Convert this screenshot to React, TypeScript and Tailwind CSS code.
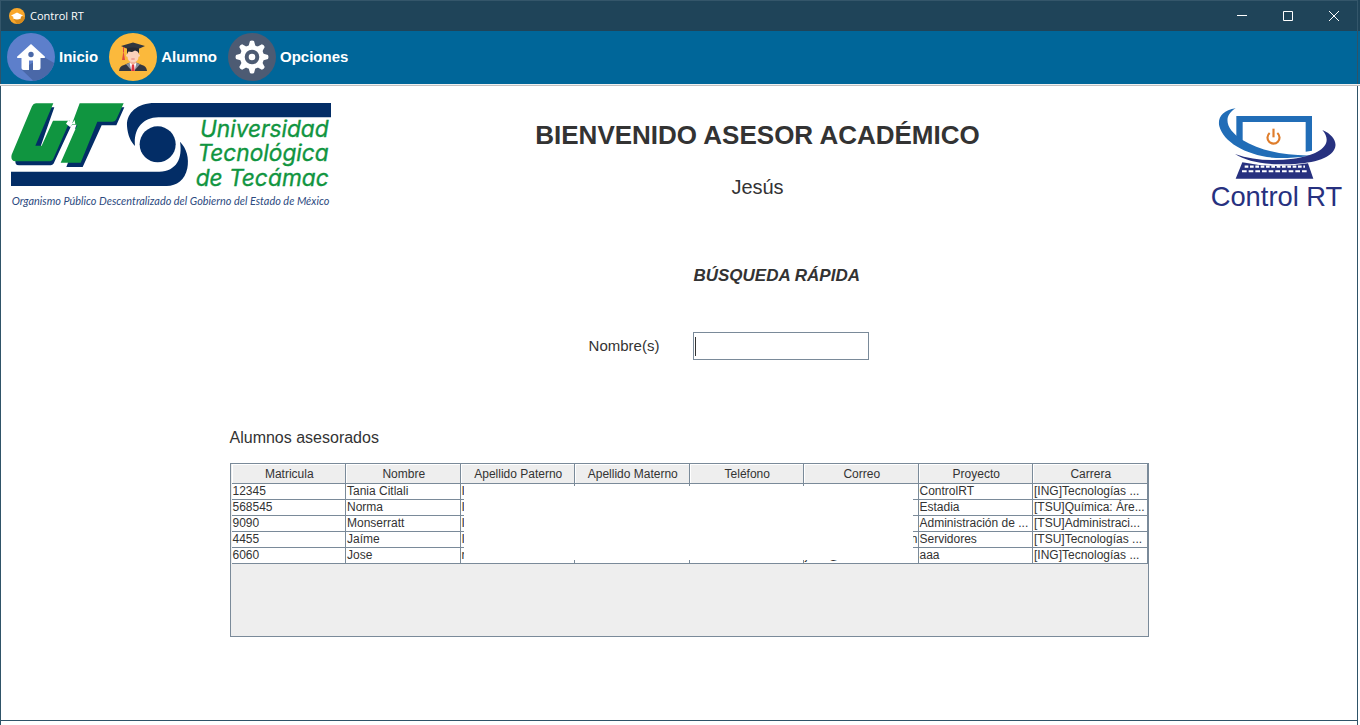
import React from "react";

const columns = [
  "Matricula",
  "Nombre",
  "Apellido Paterno",
  "Apellido Materno",
  "Teléfono",
  "Correo",
  "Proyecto",
  "Carrera",
];

type Student = {
  id: string;
  name: string;
  initial: string;
  mail?: React.ReactNode;
  project: string;
  degree: string;
};

const students: Student[] = [
  { id: "12345", name: "Tania Citlali", initial: "I", project: "ControlRT", degree: "[ING]Tecnologías ..." },
  { id: "568545", name: "Norma", initial: "I", project: "Estadia", degree: "[TSU]Química: Áre..." },
  { id: "9090", name: "Monserratt", initial: "I", project: "Administración de ...", degree: "[TSU]Administraci..." },
  {
    id: "4455",
    name: "Jaíme",
    initial: "I",
    mail: <span className="block text-right">n</span>,
    project: "Servidores",
    degree: "[TSU]Tecnologías ...",
  },
  {
    id: "6060",
    name: "Jose",
    initial: "r",
    mail: (
      <span className="flex gap-5">
        <span>j</span>
        <span>@</span>
      </span>
    ),
    project: "aaa",
    degree: "[ING]Tecnologías ...",
  },
];

function AppIcon() {
  return (
    <svg viewBox="0 0 16 16" className="size-4" aria-hidden="true">
      <circle cx="8" cy="8" r="8" fill="#f9a72b" />
      <path d="M13 8l3 1.500A8 8 0 0 1 8 16L4.500 11z" fill="#d68a1c" />
      <path d="M2 7.500L8 4.600l6 2.900-2.200 1.200v1.800Q8 12.600 4.300 10.500V8.700z" fill="#fff" />
    </svg>
  );
}

function HomeIcon() {
  return (
    <svg viewBox="0 0 48 48" className="size-12" aria-hidden="true">
      <circle cx="24" cy="24" r="24" fill="#5d7fcb" />
      <path d="M36 23.500L47.200 30A24 24 0 0 1 26.500 47.900L14.500 36.500z" fill="#4a68a8" />
      <path
        d="M24 11L10 23.700Q9.600 25 11 25H14.500V35Q14.500 37 16.500 37H22V27.500H26V37H31.500Q33.500 37 33.500 35V25H37Q38.400 25 38 23.700z"
        fill="#fff"
      />
      <circle cx="24" cy="21.500" r="2.700" fill="#4a68a8" />
    </svg>
  );
}

function StudentIcon() {
  return (
    <svg viewBox="0 0 48 48" className="size-12" aria-hidden="true">
      <circle cx="24" cy="24" r="24" fill="#fbb93c" />
      <path d="M10 38Q10.500 33 15 32L21 29.500H27L33 32Q37.500 33 38 38z" fill="#333741" />
      <path d="M17 31.200L21 29.500H27L31 31.200L25 38H23z" fill="#8b8f9b" />
      <path d="M20.500 29.500H27.500L25.500 38H22.500z" fill="#fff" />
      <path d="M23 31H25L25.800 38H22.200z" fill="#df3540" />
      <path d="M21 26H27V30L24 32L21 30z" fill="#f1b59c" />
      <path d="M18.500 17H29.500V23.500Q29.500 29 24 29Q18.500 29 18.500 23.500z" fill="#fbd1bb" />
      <circle cx="18.300" cy="22.500" r="1.200" fill="#fbd1bb" />
      <circle cx="29.700" cy="22.500" r="1.200" fill="#fbd1bb" />
      <path d="M18 14H30V20.500L28.500 18.500L26 17.500L23 19L19.500 18.500L18 21z" fill="#262a33" />
      <path d="M24 9.500L36 13L30.500 15.500Q24 13.500 17.500 15.500L12 13z" fill="#303640" />
      <path d="M14.500 14V19" stroke="#e04a3f" strokeWidth="1" />
      <path d="M14.500 18L16 27H13z" fill="#e04a3f" />
      <path d="M22.300 26H25.700" stroke="#d9575a" strokeWidth=".7" />
    </svg>
  );
}

function GearIcon() {
  return (
    <svg viewBox="0 0 48 48" className="size-12" aria-hidden="true">
      <circle cx="24" cy="24" r="24" fill="#4d5b73" />
      <g fill="#fff">
        {[0, 45, 90, 135, 180, 225, 270, 315].map((angle) => (
          <path key={angle} d="M20 15L22 8Q24 7 26 8L28 15z" transform={`rotate(${angle} 24 24)`} />
        ))}
        <circle cx="24" cy="24" r="12" />
      </g>
      <circle cx="24" cy="24" r="5.300" fill="none" stroke="#4d5b73" strokeWidth="4" />
    </svg>
  );
}

function UniversityLogo() {
  return (
    <svg
      viewBox="33 39 960 321"
      className="w-[320px]"
      role="img"
      aria-label="Universidad Tecnológica de Tecámac"
    >
      <g fill="#032d66">
        <path d="M993 39H465C408 39 379 72 381 108C383 135 392 155 405 168C400 120 425 83 475 82H993z" />
        <path d="M33 245H478C530 243 548 205 540 155C560 175 568 205 562 235C555 270 530 288 500 288H33z" />
        <circle cx="473" cy="163" r="54" />
        <g transform="translate(35 36)">
          <path d="M84 16H128L84 142H104L142 68H180L127 182Q124 190 112 190H22Q8 190 12 170z" />
          <path d="M215 16H338L314 70H270L213 195H164L208 80H190z" />
        </g>
      </g>
      <g transform="translate(24 24)">
        <g fill="#109540">
          <path d="M84 16H136L82 143H101L135 68H186L136 182Q132 190 120 190H22Q7 188 11 170L72 25Q76 16 84 16z" />
          <path d="M215 16H347L325 64Q322 71 314 71H268L218 194H158L208 80H191z" />
        </g>
        <path d="M181 67L193 76L200 66L202 79H192L187 88L174 77z" fill="#fff" />
      </g>
      <g fill="#109540" stroke="#109540" strokeWidth="1" fontFamily="Inter, sans-serif" fontStyle="italic" fontSize="68" textAnchor="end">
        <text x="986" y="141">Universidad</text>
        <text x="986" y="214">Tecnológica</text>
        <text x="986" y="287">de Tecámac</text>
      </g>
      <text x="35" y="345" fill="#2c4a80" fontFamily="Lato, sans-serif" fontStyle="italic" fontSize="32.700">
        Organismo Público Descentralizado del Gobierno del Estado de México
      </text>
    </svg>
  );
}

function ControlLogo() {
  return (
    <svg viewBox="0 0 402 330" className="w-[134px] overflow-visible" role="img" aria-label="Control RT">
      <path d="M79 48H306V152L287 155V66H98V135L79 122z" fill="#216db7" />
      <path
        d="M77 25C38 30 22 54 28 79C42 133 130 179 232 174C262 173 286 171 307 166C232 168 155 155 96 119C52 90 34 52 77 25z"
        fill="#216db7"
      />
      <path
        d="M337 90C372 105 384 130 372 150C352 183 285 194 205 193C145 192 105 180 75 162C128 181 190 184 250 176C328 165 374 133 337 90z"
        fill="#27317f"
      />
      <path d="M97 187Q190 207 294 190L310 236H77z" fill="#27317f" />
      <g stroke="#fff" fill="none">
        <path d="M104 200H285" strokeWidth="7" strokeDasharray="11 5" />
        <path d="M96 214H290" strokeWidth="6" strokeDasharray="14 6" />
      </g>
      <path d="M179 99A18 18 0 1 0 202 99" fill="none" stroke="#df7d2b" strokeWidth="6.500" />
      <path d="M190.500 86V112" stroke="#df7d2b" strokeWidth="6.500" />
      <text x="2" y="319" fill="#27317f" fontFamily="Liberation Sans, Arial, sans-serif" fontSize="82">
        Control RT
      </text>
    </svg>
  );
}

const menu = [
  { label: "Inicio", Icon: HomeIcon },
  { label: "Alumno", Icon: StudentIcon },
  { label: "Opciones", Icon: GearIcon },
];

export default function App() {
  return (
    <div className="flex min-h-screen flex-col bg-white font-['Liberation_Sans',Arial,sans-serif] text-[#333]">
      <header className="bg-[#1f4459]">
        <div className="mr-0.5 flex h-[31px] items-center border-t border-r border-l border-[#34566a] pl-2">
          <AppIcon />
          <span className="ml-[5px] font-['Open_Sans',sans-serif] text-[11px] text-white">Control RT</span>
          <div className="ml-auto flex h-full text-white">
            <button type="button" aria-label="Minimizar" className="grid w-[46px] place-items-center">
              <svg viewBox="0 0 10 10" className="size-2.5" stroke="currentColor" shapeRendering="crispEdges">
                <path d="M0 4.500H10" />
              </svg>
            </button>
            <button type="button" aria-label="Maximizar" className="grid w-[46px] place-items-center">
              <svg viewBox="0 0 10 10" className="size-2.5" stroke="currentColor" fill="none">
                <path d="M.5.500H9.500V9.500H.5z" />
              </svg>
            </button>
            <button type="button" aria-label="Cerrar" className="grid w-[46px] place-items-center">
              <svg viewBox="0 0 10 10" className="size-2.5" stroke="currentColor">
                <path d="M0 0L10 10M10 0L0 10" />
              </svg>
            </button>
          </div>
        </div>
      </header>

      <nav className="border-b border-[#c0c0c0] bg-[#006699]">
        <div className="mr-0.5 border-r border-l border-[#2f5368]">
          <div className="flex h-[53px] items-start gap-[11px] pt-0.5 pl-1.5">
            {menu.map(({ label, Icon }) => (
              <button key={label} type="button" className="flex items-center gap-1 text-[15px] font-bold text-white">
                <Icon />
                {label}
              </button>
            ))}
          </div>
        </div>
        <div className="h-px bg-[#f0f0f0]" />
      </nav>

      <main className="mr-0.5 flex-1 border-r border-b border-l border-[#2f5368]">
        <section className="grid grid-cols-[320px_1fr_160px] pt-[17px] pr-[13px] pl-2.5">
          <UniversityLogo />
          <div className="flex flex-col items-center gap-5 pt-4">
            <h1 className="text-[26px] leading-8 font-bold">BIENVENIDO ASESOR ACADÉMICO</h1>
            <p className="text-[20px] leading-8">Jesús</p>
          </div>
          <div className="-mt-[3px] flex justify-end">
            <ControlLogo />
          </div>
        </section>

        <section className="mt-[54px] flex justify-center pl-[100px]">
          <div className="grid grid-cols-[auto_176px] items-center gap-x-[34px] gap-y-11">
            <h2 className="col-start-2 text-[17px] leading-6 font-bold whitespace-nowrap italic">BÚSQUEDA RÁPIDA</h2>
            <label htmlFor="nombre" className="col-start-1 text-[15px] leading-5">
              Nombre(s)
            </label>
            <div className="relative">
              <input
                id="nombre"
                type="text"
                className="block h-7 w-full border border-[#7a8a99] bg-white px-0.5 text-[15px] outline-none"
              />
              <span className="absolute top-[5px] left-0.5 h-[19px] w-px bg-[#333]" />
            </div>
          </div>
        </section>

        <section className="mx-auto mt-[66px] mb-10 w-full max-w-[939px] pl-5">
          <h2 id="asesorados" className="text-[16px] leading-6">
            Alumnos asesorados
          </h2>
          <div className="relative mt-[13px] min-h-[174px] border border-[#7a8a99] bg-[#eee] pl-px">
            <table
              aria-labelledby="asesorados"
              className="w-full table-fixed border-separate border-spacing-0 text-[12px] leading-[15px]"
            >
              <thead>
                <tr>
                  {columns.map((column) => (
                    <th
                      key={column}
                      className="h-5 border-r border-b border-[#7a8a99] p-0 pt-0.5 pl-0.5 font-normal whitespace-nowrap shadow-[inset_1px_1px_0_#fff]"
                    >
                      {column}
                    </th>
                  ))}
                </tr>
              </thead>
              <tbody className="bg-white [&_td]:overflow-hidden [&_td]:border-r [&_td]:border-b [&_td]:border-[#7a8a99] [&_td]:p-0 [&_td]:pl-px [&_td]:whitespace-nowrap">
                {students.map((student) => (
                  <tr key={student.id}>
                    <td>{student.id}</td>
                    <td>{student.name}</td>
                    <td>{student.initial}</td>
                    <td />
                    <td />
                    <td>{student.mail}</td>
                    <td>{student.project}</td>
                    <td>{student.degree}</td>
                  </tr>
                ))}
              </tbody>
            </table>
            <div className="absolute top-[22px] left-[233px] h-[74px] w-[449px] bg-white" />
          </div>
        </section>
      </main>
      <footer className="mr-0.5 h-1 border-r border-l border-[#2f5368]" />
    </div>
  );
}
